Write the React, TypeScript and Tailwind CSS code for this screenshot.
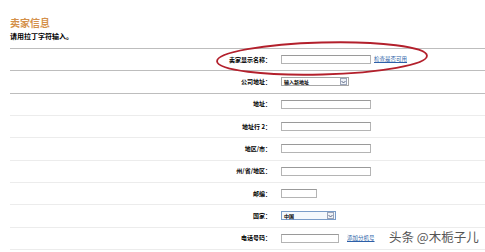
const font = { fontFamily: '"Noto Sans CJK SC", "Liberation Sans", sans-serif' }

const rows = [
  { label: '卖家显示名称：', kind: 'input', w: 'w-[90px]', link: '检查是否可用', dark: true },
  { label: '公司地址：', kind: 'select', w: 'w-[68px]', value: '输入新地址', dark: true },
  { label: '地址：', kind: 'input', w: 'w-[90px]' },
  { label: '地址行 2：', kind: 'input', w: 'w-[90px]' },
  { label: '地区/市：', kind: 'input', w: 'w-[90px]' },
  { label: '州/省/地区：', kind: 'input', w: 'w-[90px]' },
  { label: '邮编：', kind: 'input', w: 'w-[36px]' },
  { label: '国家：', kind: 'country', w: 'w-[55px]', value: '中国' },
  { label: '电话号码：', kind: 'input', w: 'w-[58px]', link: '添加分机号', linkGap: 'ml-[8px]' },
]

function Control({ row }: { row: (typeof rows)[number] }) {
  if (row.kind === 'select' || row.kind === 'country') {
    const country = row.kind === 'country'
    return (
      <div
        className={`${row.w} h-[9px] flex items-center justify-between border ${
          country ? 'border-[#7a9cc8] bg-[#f4f8fc]' : 'border-[#a8a8a8] bg-white'
        }`}
      >
        <span className="text-[5px] leading-none font-bold text-black pl-[2px]">{row.value}</span>
        <span className="w-[7px] h-[7px] mr-[1px] border border-[#9aa4b8] bg-[#eef1f6] flex items-center justify-center">
          <svg width="5" height="4" viewBox="0 0 5 4">
            <path d="M0.5 1 L2.5 3 L4.5 1" fill="none" stroke="#4a5a7a" strokeWidth="0.9" />
          </svg>
        </span>
      </div>
    )
  }
  return <div className={`${row.w} h-[9px] border border-[#b4b4b4] border-t-[#9a9a9a] bg-white`} />
}

export default function App() {
  return (
    <div className="relative w-[485px] h-[252px] bg-white overflow-hidden" style={font}>
      <div className="pl-[10px] pt-[17px]">
        <div className="text-[10px] leading-[12px] text-[#d4904a] font-bold">卖家信息</div>
        <div className="text-[7px] leading-[9px] mt-[3px] font-bold text-black">请用拉丁字符输入。</div>
        <div className="mt-[7px] border-t border-[#bdbdbd]">
          {rows.map((row) => (
            <div
              key={row.label}
              className={`flex items-center h-[22.33px] border-b ${row.dark ? 'border-[#bdbdbd]' : 'border-[#ececec]'}`}
            >
              <div className="w-[261px] text-right text-[6px] leading-none font-bold text-black">{row.label}</div>
              <div className="ml-[10px] flex items-center">
                <Control row={row} />
                {row.link && (
                  <span className={`${row.linkGap ?? 'ml-[3px]'} text-[5.5px] leading-none text-[#2d5fa8] underline`}>
                    {row.link}
                  </span>
                )}
              </div>
            </div>
          ))}
        </div>
      </div>

      <svg className="absolute left-0 top-0 pointer-events-none" width="485" height="252">
        <ellipse cx="322" cy="58.5" rx="105" ry="16" fill="none" stroke="#b3202c" strokeWidth="1.8" transform="rotate(-1.5 322 58.5)" />
      </svg>

      <div className="absolute left-[389px] top-[231px] text-[12.5px] leading-none text-[#555] [text-shadow:0_0_2px_#fff]">
        头条 @木栀子儿
      </div>
    </div>
  )
}
